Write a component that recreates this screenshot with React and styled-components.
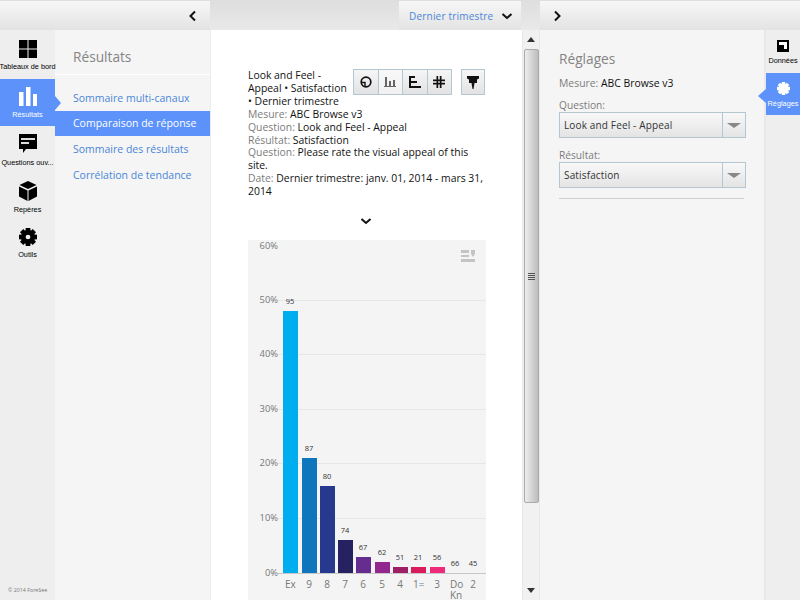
import React from "react";
import styled, { createGlobalStyle } from "styled-components";

const GlobalStyle = createGlobalStyle`
  html, body {
    margin: 0;
    padding: 0;
    background: #fff;
    font-family: "Open Sans", sans-serif;
  }
`;

const Page = styled.div`
  width: 800px;
  height: 600px;
  overflow: hidden;
  display: flex;
  flex-direction: column;
`;

const TopBar = styled.div`
  height: 30px;
  flex: none;
  display: flex;
  background: linear-gradient(#dedede, #e9e9e9);
`;

const TopSegment = styled.div`
  width: ${({ $w }) => $w}px;
  margin-left: ${({ $ml }) => $ml || 0}px;
  margin-top: 1px;
  display: flex;
  align-items: center;
  justify-content: ${({ $end }) => ($end ? "flex-end" : "flex-start")};
  padding: ${({ $pad }) => $pad || "0"};
  box-sizing: border-box;
  background: linear-gradient(#f7f7f7, #e3e3e3);
`;

const PeriodLabel = styled.span`
  font-size: 10px;
  color: #4a86d8;
  letter-spacing: 0.2px;
  margin-right: 8px;
`;

const Body = styled.div`
  flex: 1;
  display: flex;
  min-height: 0;
`;

const LeftRail = styled.nav`
  width: 55px;
  flex: none;
  background: #eeeeee;
  padding-top: 2px;
  box-sizing: border-box;
  position: relative;
`;

const RailItem = styled.div`
  height: 47px;
  padding-top: 8px;
  box-sizing: border-box;
  display: flex;
  flex-direction: column;
  align-items: center;
  position: relative;
  background: ${({ $active }) => ($active ? "#5c92fa" : "transparent")};
  color: ${({ $active }) => ($active ? "#fff" : "#000")};
  svg {
    display: block;
    flex: none;
  }
`;

const RailLabel = styled.span`
  font-family: "Liberation Sans", Arial, sans-serif;
  font-size: 7.3px;
  line-height: 10px;
  margin-top: 4px;
  white-space: nowrap;
`;

const Notch = styled.span`
  position: absolute;
  top: ${({ $left }) => ($left ? 16 : 17)}px;
  ${({ $left }) => ($left ? "left: -8px;" : "right: -6px;")}
  width: 0;
  height: 0;
  border-top: 7px solid transparent;
  border-bottom: 7px solid transparent;
  ${({ $left }) =>
    $left ? "border-right: 8px solid #5c92fa;" : "border-left: 6px solid #5c92fa;"}
`;

const Copyright = styled.div`
  position: absolute;
  left: 8px;
  bottom: 6px;
  font-size: 5.3px;
  color: #777;
  white-space: nowrap;
`;

const SubPanel = styled.aside`
  width: 155px;
  flex: none;
  background: #f5f5f5;
  border-right: 1px solid #ececec;
`;

const PanelTitle = styled.h2`
  margin: 0;
  font-size: 13.7px;
  font-weight: 400;
  color: #848484;
  line-height: 20px;
  padding: 17px 0 7px 18px;
  border-bottom: 1px solid #fff;
`;

const SubList = styled.div`
  padding-top: 10px;
`;

const SubItem = styled.div`
  height: ${({ $active }) => ($active ? 25 : 26)}px;
  line-height: ${({ $active }) => ($active ? 25 : 26)}px;
  padding-left: 18px;
  font-size: 10.5px;
  white-space: nowrap;
  color: ${({ $active }) => ($active ? "#fff" : "#4a86d8")};
  background: ${({ $active }) => ($active ? "#5c92fa" : "transparent")};
`;

const Main = styled.main`
  width: 311px;
  flex: none;
  box-sizing: border-box;
  padding: 39px 37px 0;
  overflow: hidden;
  background: #fff;
`;

const Summary = styled.div`
  font-size: 10.4px;
  line-height: 12.9px;
  color: #111;
  min-height: 129px;
`;

const ToolGroup = styled.div`
  float: right;
  display: flex;
  gap: 9px;
  margin-left: 5px;
`;

const ToolButtons = styled.div`
  display: flex;
  border: 1px solid #b4c6d0;
`;

const ToolButton = styled.div`
  width: ${({ $w }) => $w || 23.5}px;
  height: 24px;
  display: flex;
  align-items: center;
  justify-content: center;
  background: ${({ $active }) =>
    $active ? "linear-gradient(#f8f8f8, #f1f1f1)" : "linear-gradient(#f6f6f6, #e2e2e2)"};
  & + & {
    border-left: 1px solid #b4c6d0;
  }
`;

const Muted = styled.span`
  color: #7c7c7c;
`;

const ExpandRow = styled.div`
  display: flex;
  justify-content: center;
  height: 20px;
  margin: 17px 0 5px;
  padding-right: 1px;
`;

const ChartPanel = styled.div`
  width: 238px;
  height: 360px;
  background: #f4f4f4;
`;

const ScrollTrack = styled.div`
  width: 18px;
  flex: none;
  background: #f1f1f1;
  border-left: 1px solid #e8e8e8;
  border-right: 1px solid #e8e8e8;
  box-sizing: border-box;
  display: flex;
  flex-direction: column;
  align-items: center;
`;

const ScrollArrow = styled.div`
  height: 19px;
  flex: none;
  display: flex;
  align-items: center;
  justify-content: center;
`;

const ScrollThumb = styled.div`
  width: 15px;
  height: 454px;
  flex: none;
  box-sizing: border-box;
  border: 1px solid #aaa;
  border-radius: 2px;
  background: linear-gradient(90deg, #eee, #d2d2d2 55%, #bdbdbd);
  display: flex;
  align-items: center;
  justify-content: center;
`;

const Grip = styled.div`
  width: 7px;
  height: 7px;
  background: repeating-linear-gradient(#555 0 1px, transparent 1px 2px);
`;

const ScrollSpacer = styled.div`
  flex: 1;
`;

const SettingsPanel = styled.aside`
  width: 224px;
  flex: none;
  box-sizing: border-box;
  background: #f5f5f5;
  padding: 19px 18px 0 19px;
  color: #111;
`;

const SettingsTitle = styled.h2`
  margin: 0 0 7px;
  font-size: 13.7px;
  font-weight: 400;
  line-height: 20px;
  color: #848484;
`;

const MeasureLine = styled.div`
  font-size: 10.4px;
  line-height: 14px;
  margin-bottom: 9px;
`;

const FieldLabel = styled.div`
  font-size: 10.2px;
  line-height: 13px;
  color: #7c7c7c;
`;

const Select = styled.div`
  height: 26px;
  box-sizing: border-box;
  border: 1px solid #b4c6d0;
  display: flex;
  background: linear-gradient(#f8f8f8, #e4e4e4);
  margin-bottom: 11px;
`;

const SelectText = styled.div`
  flex: 1;
  padding-left: 4px;
  font-size: 10px;
  line-height: 24px;
  letter-spacing: 0.15px;
  color: #333;
`;

const SelectArrow = styled.div`
  width: 22px;
  border-left: 1px solid #b4c6d0;
  display: flex;
  align-items: center;
  justify-content: center;
  &::after {
    content: "";
    border-top: 5px solid #888;
    border-left: 7px solid transparent;
    border-right: 7px solid transparent;
  }
`;

const Divider = styled.div`
  height: 1px;
  background: #cfcfcf;
  margin: -1px 2px 0 0;
`;

const RightRail = styled.nav`
  width: 36px;
  flex: none;
  background: #eeeeee;
  border-left: 2px solid #e8e8e8;
  box-sizing: border-box;
  padding-top: 10px;
`;

const SideItem = styled.div`
  height: ${({ $h }) => $h}px;
  padding-top: ${({ $top }) => $top}px;
  box-sizing: border-box;
  display: flex;
  flex-direction: column;
  align-items: center;
  position: relative;
  background: ${({ $active }) => ($active ? "#5c92fa" : "transparent")};
  color: ${({ $active }) => ($active ? "#fff" : "#000")};
  svg {
    display: block;
    flex: none;
  }
`;

const Chevron = ({ dir, size = 12 }) => {
  const paths = {
    left: "M8 1.5 L3.5 6 L8 10.5",
    right: "M4 1.5 L8.5 6 L4 10.5",
    down: "M1.5 4 L6 8 L10.5 4",
  };
  return (
    <svg width={size} height={size} viewBox="0 0 12 12" fill="none">
      <path d={paths[dir]} stroke="#111" strokeWidth="2" />
    </svg>
  );
};

const DashboardIcon = () => (
  <svg width="18" height="18" viewBox="0 0 18 18" fill="#000">
    <rect x="0" y="0" width="8.5" height="8.5" />
    <rect x="9.5" y="0" width="8.5" height="8.5" />
    <rect x="0" y="9.5" width="8.5" height="8.5" />
    <rect x="9.5" y="9.5" width="8.5" height="8.5" />
  </svg>
);

const ResultsIcon = () => (
  <svg width="18" height="19" viewBox="0 0 18 19" fill="#fff">
    <rect x="0" y="5" width="4.5" height="14" />
    <rect x="7" y="0" width="4.5" height="19" />
    <rect x="14" y="7" width="4" height="12" />
  </svg>
);

const CommentIcon = () => (
  <svg width="18" height="20" viewBox="0 0 18 20">
    <path d="M0 0H18V15H7L4 19V15H0Z" fill="#000" />
    <rect x="2" y="4" width="14" height="2" fill="#ddd" />
    <rect x="2" y="8" width="8" height="2" fill="#ddd" />
  </svg>
);

const CubeIcon = () => (
  <svg width="18" height="20" viewBox="0 0 18 20" fill="#000">
    <path d="M9 0L17.5 4L9 8L0.5 4Z" />
    <path d="M0 5.5L8.5 9.5V20L0 15.5Z" />
    <path d="M18 5.5L9.5 9.5V20L18 15.5Z" />
  </svg>
);

const GearIcon = ({ size = 18, color = "#000", hole = "#eee", holeR = 2.5 }) => (
  <svg width={size} height={size} viewBox="0 0 19 19" fill={color}>
    <circle cx="9.5" cy="9.5" r="7.5" />
    <rect x="7" y="0" width="5" height="19" />
    <rect x="0" y="7" width="19" height="5" />
    <rect x="7" y="0" width="5" height="19" transform="rotate(45 9.5 9.5)" />
    <rect x="7" y="0" width="5" height="19" transform="rotate(-45 9.5 9.5)" />
    <circle cx="9.5" cy="9.5" r={holeR} fill={hole} />
  </svg>
);

const DataIcon = () => (
  <svg width="12" height="12" viewBox="0 0 12 12">
    <rect width="12" height="12" fill="#000" />
    <path d="M2 2H10V9H7V5H2Z" fill="#fff" />
  </svg>
);

const PieIcon = () => (
  <svg width="12" height="12" viewBox="0 0 12 12" fill="none" stroke="#111">
    <circle cx="6" cy="6" r="4.8" strokeWidth="1.7" />
    <path d="M5 11V6.5H1" strokeWidth="1.4" />
  </svg>
);

const ColumnsIcon = () => (
  <svg width="12" height="12" viewBox="0 0 12 12" fill="#666">
    <rect x="1" y="1" width="2" height="10" />
    <rect x="5" y="5" width="2" height="6" />
    <rect x="9" y="4" width="2" height="7" />
    <rect x="0" y="10" width="12" height="1" />
  </svg>
);

const HBarsIcon = () => (
  <svg width="12" height="12" viewBox="0 0 12 12" fill="#111">
    <rect x="0" y="0" width="2" height="12" />
    <rect x="0" y="0" width="6" height="2" />
    <rect x="0" y="5" width="8" height="2" />
    <rect x="0" y="10" width="12" height="2" />
  </svg>
);

const GridIcon = () => (
  <svg width="12" height="12" viewBox="0 0 12 12" fill="#111">
    <rect x="3.5" y="0" width="1.7" height="12" />
    <rect x="6.8" y="0" width="1.7" height="12" />
    <rect x="0" y="3.5" width="12" height="1.7" />
    <rect x="0" y="6.8" width="12" height="1.7" />
  </svg>
);

const PinIcon = () => (
  <svg width="12" height="13" viewBox="0 0 12 13" fill="#111">
    <path d="M0 0H12V2.5L10 3.5V7H7.5L6.5 13H5.5L4.5 7H2V3.5L0 2.5Z" />
  </svg>
);

const bars = [
  { label: "Excellent", count: 95, top: 71, color: "#00aeef", x: 35 },
  { label: "9", count: 87, top: 218, color: "#0f75bc", x: 54 },
  { label: "8", count: 80, top: 246, color: "#27388f", x: 72 },
  { label: "7", count: 74, top: 300, color: "#262262", x: 90 },
  { label: "6", count: 67, top: 317, color: "#662d91", x: 108 },
  { label: "5", count: 62, top: 322, color: "#92278f", x: 127 },
  { label: "4", count: 51, top: 327, color: "#9e1f63", x: 145 },
  { label: "1=Poor", count: 21, top: 327, color: "#da1c5c", x: 163 },
  { label: "3", count: 56, top: 327, color: "#ee2a7b", x: 182 },
  { label: "Do", count: 66, top: 333, color: "none", x: 200 },
  { label: "2", count: 45, top: 333, color: "none", x: 218 },
];

const gridLines = [
  { label: "60%", y: 5 },
  { label: "50%", y: 60 },
  { label: "40%", y: 114 },
  { label: "30%", y: 169 },
  { label: "20%", y: 223 },
  { label: "10%", y: 278 },
];

const BASELINE = 333;

// chart is drawn with the panel's own coordinates (248,240 is its origin)
const Chart = () => (
  <svg width="238" height="360" viewBox="0 0 238 360" style={{ display: "block" }}>
    <g fill="#c4c4c4">
      <rect x="213" y="10" width="8" height="3" />
      <rect x="213" y="15" width="8" height="2" />
      <rect x="213" y="19" width="14" height="3" />
      <path d="M223 10h4v4l-2 3l-2-3Z" />
    </g>
    {gridLines.map((g) => (
      <g key={g.label}>
        {g.y > 10 && (
          <line x1="30" x2="238" y1={g.y + 0.5} y2={g.y + 0.5} stroke="#e6e6e6" />
        )}
        <text
          x="30"
          y={g.y + (g.y > 10 ? 3 : 4)}
          textAnchor="end"
          fontSize="9.4"
          fontFamily="Open Sans, sans-serif"
          fill="#777"
        >
          {g.label}
        </text>
      </g>
    ))}
    <text x="30" y={BASELINE + 3} textAnchor="end" fontSize="9.4" fontFamily="Open Sans, sans-serif" fill="#777">
      0%
    </text>
    <line x1="30" x2="238" y1={BASELINE + 0.5} y2={BASELINE + 0.5} stroke="#c8c8c8" />
    {bars.map((b) => (
      <g key={b.label}>
        {b.color !== "none" && (
          <rect x={b.x} y={b.top} width="15" height={BASELINE - b.top} fill={b.color} />
        )}
        <text
          x={b.x + 7}
          y={b.top - 7}
          textAnchor="middle"
          fontSize="7.5"
          fontFamily="Open Sans, sans-serif"
          fill="#333"
        >
          {b.count}
        </text>
        <svg x={b.x + 2} y={BASELINE + 4} width={b.label === "Do" ? 14 : 11} height="14">
          <text
            x={b.label.length === 1 ? 5 : 0}
            y="11"
            textAnchor={b.label.length === 1 ? "middle" : "start"}
            fontSize="10"
            fontFamily="Open Sans, sans-serif"
            fill="#777"
          >
            {b.label}
          </text>
        </svg>
      </g>
    ))}
    <text x="202" y="359" fontSize="10" fontFamily="Open Sans, sans-serif" fill="#777">
      Kn
    </text>
  </svg>
);

const App = () => (
  <Page>
    <GlobalStyle />
    <TopBar>
      <TopSegment $w={210} $end $pad="0 11px 0 0">
        <Chevron dir="left" />
      </TopSegment>
      <TopSegment $w={122} $ml={189} $pad="0 0 0 10px">
        <PeriodLabel>Dernier trimestre</PeriodLabel>
        <Chevron dir="down" />
      </TopSegment>
      <TopSegment $w={260} $ml={19} $pad="0 0 0 11px">
        <Chevron dir="right" />
      </TopSegment>
    </TopBar>
    <Body>
      <LeftRail>
        <RailItem>
          <DashboardIcon />
          <RailLabel>Tableaux de bord</RailLabel>
        </RailItem>
        <RailItem $active>
          <ResultsIcon />
          <RailLabel>Résultats</RailLabel>
          <Notch />
        </RailItem>
        <RailItem>
          <CommentIcon />
          <RailLabel>Questions ouv...</RailLabel>
        </RailItem>
        <RailItem>
          <CubeIcon />
          <RailLabel>Repères</RailLabel>
        </RailItem>
        <RailItem>
          <GearIcon />
          <RailLabel>Outils</RailLabel>
        </RailItem>
        <Copyright>© 2014 ForeSee</Copyright>
      </LeftRail>
      <SubPanel>
        <PanelTitle>Résultats</PanelTitle>
        <SubList>
          <SubItem>Sommaire multi-canaux</SubItem>
          <SubItem $active>Comparaison de réponse</SubItem>
          <SubItem>Sommaire des résultats</SubItem>
          <SubItem>Corrélation de tendance</SubItem>
        </SubList>
      </SubPanel>
      <Main>
        <Summary>
          <ToolGroup>
            <ToolButtons>
              <ToolButton>
                <PieIcon />
              </ToolButton>
              <ToolButton $active>
                <ColumnsIcon />
              </ToolButton>
              <ToolButton>
                <HBarsIcon />
              </ToolButton>
              <ToolButton>
                <GridIcon />
              </ToolButton>
            </ToolButtons>
            <ToolButtons>
              <ToolButton $w={22}>
                <PinIcon />
              </ToolButton>
            </ToolButtons>
          </ToolGroup>
          Look and Feel - Appeal • Satisfaction • Dernier trimestre
          <br />
          <Muted>Mesure:</Muted> ABC Browse v3
          <br />
          <Muted>Question:</Muted> Look and Feel - Appeal
          <br />
          <Muted>Résultat:</Muted> Satisfaction
          <br />
          <Muted>Question:</Muted> Please rate the visual appeal of this site.
          <br />
          <Muted>Date:</Muted> Dernier trimestre: janv. 01, 2014 - mars 31, 2014
        </Summary>
        <ExpandRow>
          <Chevron dir="down" />
        </ExpandRow>
        <ChartPanel>
          <Chart />
        </ChartPanel>
      </Main>
      <ScrollTrack>
        <ScrollArrow>
          <svg width="8" height="5" viewBox="0 0 8 5">
            <path d="M4 0L8 5H0Z" fill="#333" />
          </svg>
        </ScrollArrow>
        <ScrollThumb>
          <Grip />
        </ScrollThumb>
        <ScrollSpacer />
        <ScrollArrow>
          <svg width="8" height="5" viewBox="0 0 8 5">
            <path d="M0 0H8L4 5Z" fill="#333" />
          </svg>
        </ScrollArrow>
      </ScrollTrack>
      <SettingsPanel>
        <SettingsTitle>Réglages</SettingsTitle>
        <MeasureLine>
          <Muted>Mesure:</Muted> ABC Browse v3
        </MeasureLine>
        <FieldLabel>Question:</FieldLabel>
        <Select>
          <SelectText>Look and Feel - Appeal</SelectText>
          <SelectArrow />
        </Select>
        <FieldLabel>Résultat:</FieldLabel>
        <Select>
          <SelectText>Satisfaction</SelectText>
          <SelectArrow />
        </Select>
        <Divider />
      </SettingsPanel>
      <RightRail>
        <SideItem $h={33} $top={0}>
          <DataIcon />
          <RailLabel>Données</RailLabel>
        </SideItem>
        <SideItem $h={42} $top={9} $active>
          <GearIcon size={13} color="#fff" hole="#fff" holeR={0} />
          <RailLabel>Réglages</RailLabel>
          <Notch $left />
        </SideItem>
      </RightRail>
    </Body>
  </Page>
);

export default App;
